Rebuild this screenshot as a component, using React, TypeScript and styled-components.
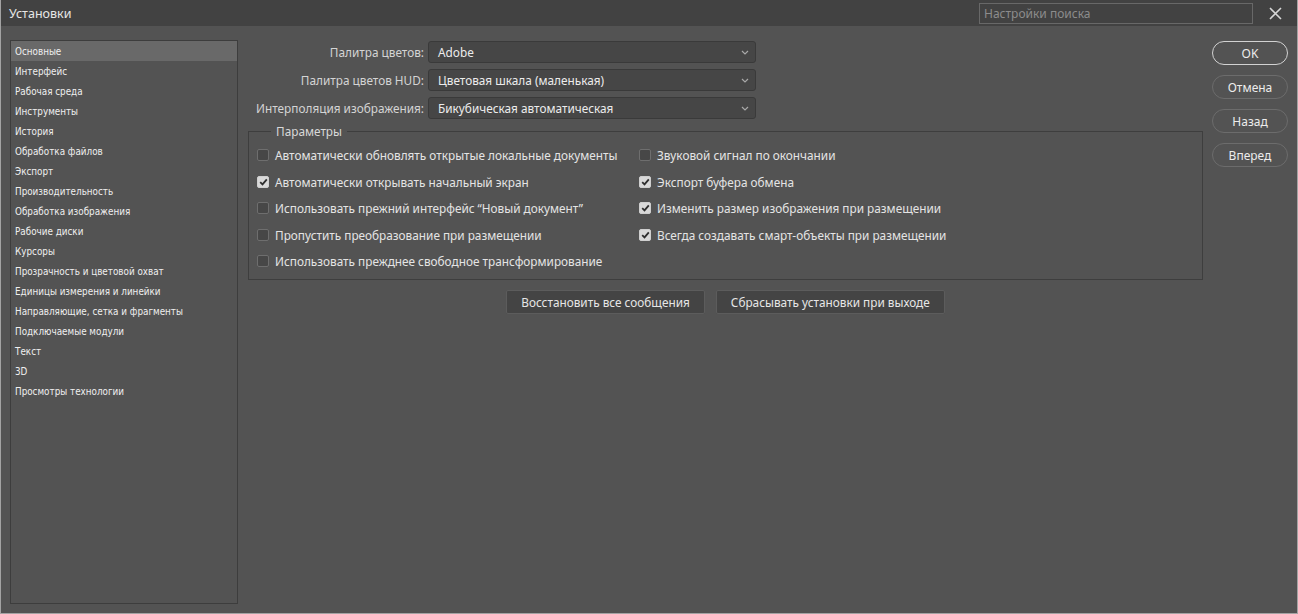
import React from "react";
import styled, { createGlobalStyle } from "styled-components";

const Global = createGlobalStyle`
  html, body { margin: 0; padding: 0; background: #535353; }
  * { box-sizing: border-box; }
`;

const Window = styled.div`
  width: 1298px;
  height: 614px;
  display: flex;
  flex-direction: column;
  background: #535353;
  border: 1px solid #a3a3a3;
  border-top: none;
  font-family: "Noto Sans", "Liberation Sans", sans-serif;
  color: #dcdcdc;
  overflow: hidden;
`;

const TitleBar = styled.div`
  height: 26px;
  flex: none;
  display: flex;
  align-items: center;
  background: #424242;
  padding: 0 8px 0 8px;
`;

const Title = styled.div`
  font-size: 12.5px;
  color: #e6e6e6;
  flex: 1;
`;

const Search = styled.div`
  width: 274px;
  height: 21px;
  border: 1px solid #686868;
  font-size: 12px;
  color: #8c8c8c;
  display: flex;
  align-items: center;
  padding-left: 4px;
  margin-top: 1px;
`;

const CloseBtn = styled.div`
  width: 44px;
  display: flex;
  justify-content: center;
  align-items: center;
  margin-right: -8px;
`;

const Body = styled.div`
  flex: 1;
  display: flex;
  padding: 14px 11px 9px 9px;
  gap: 10px;
  min-height: 0;
`;

const Sidebar = styled.div`
  width: 228px;
  flex: none;
  border: 1px solid #3d3d3d;
  display: flex;
  flex-direction: column;
`;

const NavItem = styled.div<{ $active?: boolean }>`
  height: 20px;
  display: flex;
  align-items: center;
  padding-left: 4px;
  font-family: "DejaVu Sans", sans-serif;
  font-stretch: condensed;
  font-size: 9.8px;
  color: #efefef;
  white-space: nowrap;
  background: ${(p) => (p.$active ? "#696969" : "transparent")};
`;

const Main = styled.div`
  flex: 1;
  display: flex;
  gap: 9px;
`;

const LeftCol = styled.div`
  width: 955px;
  display: flex;
  flex-direction: column;
`;

const FormRows = styled.div`
  display: flex;
  flex-direction: column;
  gap: 6px;
  padding-top: 1px;
`;

const FormRow = styled.div`
  display: flex;
  align-items: center;
  gap: 4px;
`;

const Label = styled.div`
  width: 176px;
  text-align: right;
  font-size: 11.8px;
  color: #d4d4d4;
  white-space: nowrap;
`;

const Select = styled.div`
  width: 328px;
  height: 22px;
  background: #464646;
  border: 1px solid #3a3a3a;
  border-radius: 3px;
  display: flex;
  align-items: center;
  justify-content: space-between;
  padding: 0 6px 0 9px;
  font-size: 11.8px;
  color: #ececec;
`;

const Fieldset = styled.fieldset`
  margin: 4px 0 0 0;
  padding: 3px 0 5px 8px;
  border: 1px solid #3e3e3e;
  height: 157px;
  display: grid;
  grid-template-columns: 382px 1fr;
  grid-auto-rows: 26.5px;
  align-content: start;
`;

const Legend = styled.legend`
  font-size: 11.8px;
  color: #d8d8d8;
  padding: 0 5px;
  margin-left: 14px;
`;

const CheckRow = styled.div<{ $col: number; $row: number }>`
  grid-column: ${(p) => p.$col};
  grid-row: ${(p) => p.$row};
  display: flex;
  align-items: center;
  gap: 6px;
  font-size: 11.8px;
  color: #e4e4e4;
  white-space: nowrap;
`;

const Box = styled.div<{ $on?: boolean }>`
  width: 12px;
  height: 12px;
  border-radius: 2px;
  flex: none;
  border: 1px solid ${(p) => (p.$on ? "#cfcfcf" : "#6e6e6e")};
  background: ${(p) => (p.$on ? "#d9d9d9" : "#474747")};
  display: flex;
  align-items: center;
  justify-content: center;
`;

const ButtonRow = styled.div`
  display: flex;
  justify-content: center;
  gap: 11px;
  margin-top: 10px;
`;

const FlatButton = styled.div`
  height: 24px;
  padding: 0 14px;
  background: #444444;
  border: 1px solid #5c5c5c;
  border-radius: 2px;
  display: flex;
  align-items: center;
  font-size: 11.8px;
  color: #e6e6e6;
`;

const RightCol = styled.div`
  width: 76px;
  display: flex;
  flex-direction: column;
  gap: 10px;
  padding-top: 1px;
`;

const PillButton = styled.div<{ $primary?: boolean }>`
  height: 24px;
  border-radius: 12px;
  border: ${(p) => (p.$primary ? "1.5px solid #d2d2d2" : "1px solid #6c6c6c")};
  display: flex;
  align-items: center;
  justify-content: center;
  font-size: 12px;
  color: #ececec;
`;

const nav = [
  "Основные",
  "Интерфейс",
  "Рабочая среда",
  "Инструменты",
  "История",
  "Обработка файлов",
  "Экспорт",
  "Производительность",
  "Обработка изображения",
  "Рабочие диски",
  "Курсоры",
  "Прозрачность и цветовой охват",
  "Единицы измерения и линейки",
  "Направляющие, сетка и фрагменты",
  "Подключаемые модули",
  "Текст",
  "3D",
  "Просмотры технологии",
];

const selects = [
  ["Палитра цветов:", "Adobe"],
  ["Палитра цветов HUD:", "Цветовая шкала (маленькая)"],
  ["Интерполяция изображения:", "Бикубическая автоматическая"],
];

const checks: { text: string; on: boolean; col: number; row: number }[] = [
  { text: "Автоматически обновлять открытые локальные документы", on: false, col: 1, row: 1 },
  { text: "Автоматически открывать начальный экран", on: true, col: 1, row: 2 },
  { text: "Использовать прежний интерфейс “Новый документ”", on: false, col: 1, row: 3 },
  { text: "Пропустить преобразование при размещении", on: false, col: 1, row: 4 },
  { text: "Использовать прежднее свободное трансформирование", on: false, col: 1, row: 5 },
  { text: "Звуковой сигнал по окончании", on: false, col: 2, row: 1 },
  { text: "Экспорт буфера обмена", on: true, col: 2, row: 2 },
  { text: "Изменить размер изображения при размещении", on: true, col: 2, row: 3 },
  { text: "Всегда создавать смарт-объекты при размещении", on: true, col: 2, row: 4 },
];

const Chevron = () => (
  <svg width="8" height="5" viewBox="0 0 8 5">
    <path d="M1 1 L4 4 L7 1" stroke="#a8a8a8" strokeWidth="1.2" fill="none" />
  </svg>
);

const Check = () => (
  <svg width="9" height="8" viewBox="0 0 9 8">
    <path d="M1.2 4.2 L3.5 6.4 L7.8 1.4" stroke="#2e2e2e" strokeWidth="1.8" fill="none" />
  </svg>
);

export default function App() {
  return (
    <>
      <Global />
      <Window>
        <TitleBar>
          <Title>Установки</Title>
          <Search>Настройки поиска</Search>
          <CloseBtn>
            <svg width="13" height="13" viewBox="0 0 13 13">
              <path d="M1 1 L12 12 M12 1 L1 12" stroke="#d6d6d6" strokeWidth="1.6" />
            </svg>
          </CloseBtn>
        </TitleBar>
        <Body>
          <Sidebar>
            {nav.map((n, i) => (
              <NavItem key={n} $active={i === 0}>
                {n}
              </NavItem>
            ))}
          </Sidebar>
          <Main>
            <LeftCol>
              <FormRows>
                {selects.map(([l, v]) => (
                  <FormRow key={l}>
                    <Label>{l}</Label>
                    <Select>
                      <span>{v}</span>
                      <Chevron />
                    </Select>
                  </FormRow>
                ))}
              </FormRows>
              <Fieldset>
                <Legend>Параметры</Legend>
                {checks.map((c) => (
                  <CheckRow key={c.text} $col={c.col} $row={c.row}>
                    <Box $on={c.on}>{c.on && <Check />}</Box>
                    <span>{c.text}</span>
                  </CheckRow>
                ))}
              </Fieldset>
              <ButtonRow>
                <FlatButton>Восстановить все сообщения</FlatButton>
                <FlatButton>Сбрасывать установки при выходе</FlatButton>
              </ButtonRow>
            </LeftCol>
            <RightCol>
              <PillButton $primary>OK</PillButton>
              <PillButton>Отмена</PillButton>
              <PillButton>Назад</PillButton>
              <PillButton>Вперед</PillButton>
            </RightCol>
          </Main>
        </Body>
      </Window>
    </>
  );
}
